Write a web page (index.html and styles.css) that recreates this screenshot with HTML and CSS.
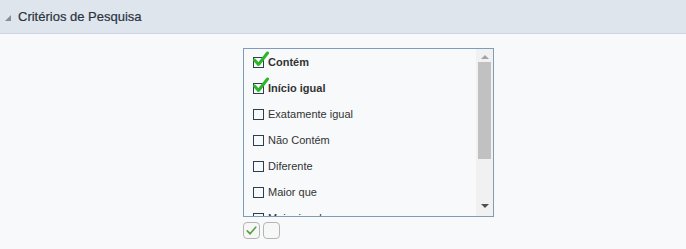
FILE: index.html
```html
<!DOCTYPE html>
<html lang="pt">
<head>
  <meta charset="UTF-8">
  <title>Critérios de Pesquisa</title>
  <link rel="stylesheet" href="styles.css">
</head>
<body>
  <div class="panel">
    <div class="panelHeader">
      <span class="toggle"></span>
      <span class="panelTitle">Critérios de Pesquisa</span>
    </div>

    <div class="panelBody">
      <div class="picker">
        <div class="listBox">
          <ul class="options">
            <li class="option checked">
              <span class="box"><svg class="tick" viewBox="0 0 16 16"><path d="M1.5 8.5 L5.5 13 L14.5 1.5" /></svg></span>
              Contém
            </li>
            <li class="option checked">
              <span class="box"><svg class="tick" viewBox="0 0 16 16"><path d="M1.5 8.5 L5.5 13 L14.5 1.5" /></svg></span>
              Início igual
            </li>
            <li class="option"><span class="box"></span>Exatamente igual</li>
            <li class="option"><span class="box"></span>Não Contém</li>
            <li class="option"><span class="box"></span>Diferente</li>
            <li class="option"><span class="box"></span>Maior que</li>
            <li class="option"><span class="box"></span>Maior igual</li>
          </ul>
          <div class="scrollBar">
            <span class="arrow up"></span>
            <span class="thumb"></span>
            <span class="arrow down"></span>
          </div>
        </div>

        <div class="actions">
          <button class="actionBtn" title="Marcar todos">
            <svg viewBox="0 0 16 16"><path d="M3.5 8.5 L6.5 11.5 L12.5 4.5" /></svg>
          </button>
          <button class="actionBtn" title="Desmarcar todos"></button>
        </div>
      </div>
    </div>
  </div>
</body>
</html>
```

FILE: styles.css
```css
html, body {
  margin: 0;
  padding: 0;
  font-family: 'Liberation Sans', Arial, sans-serif;
  background-color: #f7f9fb;
  color: #333333;
}

.panelHeader {
  height: 33px;
  background-color: #dfe5ed;
  border-bottom: 1px solid #ccd6e2;
  display: flex;
  align-items: center;
  padding-left: 5px;
}

.toggle {
  width: 0;
  height: 0;
  border-left: 6px solid transparent;
  border-bottom: 6px solid #8a8f96;
  margin-right: 7px;
  margin-top: 2px;
}

.panelTitle {
  font-size: 13px;
  color: #2a3441;
  margin-top: -1px;
  -webkit-text-stroke: 0.2px #2a3441;
}

.panelBody {
  display: flex;
  justify-content: center;
  padding-top: 14px;
}

.picker {
  margin-left: 51px;
}

.listBox {
  width: 249px;
  height: 167px;
  border: 1px solid #7f9db9;
  background-color: #f7f9fb;
  display: flex;
  overflow: hidden;
}

.options {
  list-style: none;
  margin: 0;
  padding: 0;
  flex: 1;
}

.option {
  height: 26px;
  display: flex;
  align-items: center;
  padding-left: 9px;
  font-size: 11px;
  color: #333333;
  white-space: nowrap;
}

.option.checked {
  font-weight: bold;
}

.box {
  position: relative;
  width: 9px;
  height: 9px;
  border: 1px solid #2b3f4e;
  margin-right: 4px;
  flex-shrink: 0;
}

.tick {
  position: absolute;
  left: -1px;
  top: -7px;
  width: 16px;
  height: 17px;
  fill: none;
  stroke: #2bb52b;
  stroke-width: 3;
  stroke-linecap: round;
  stroke-linejoin: round;
}

.scrollBar {
  width: 17px;
  background-color: #f1f1f1;
  display: flex;
  flex-direction: column;
  align-items: center;
}

.thumb {
  width: 13px;
  height: 97px;
  background-color: #c1c1c1;
  margin-top: 3px;
}

.arrow {
  width: 0;
  height: 0;
  border-left: 4px solid transparent;
  border-right: 4px solid transparent;
}

.arrow.up {
  border-bottom: 4px solid #a3a3a3;
  margin-top: 6px;
}

.arrow.down {
  border-top: 4px solid #505050;
  margin-top: auto;
  margin-bottom: 8px;
}

.actions {
  display: flex;
  gap: 3px;
  margin-top: 5px;
}

.actionBtn {
  width: 17px;
  height: 17px;
  padding: 0;
  border: 1px solid #b4b4b4;
  border-radius: 4px;
  background-color: #f7f7f7;
  display: flex;
  align-items: center;
  justify-content: center;
}

.actionBtn svg {
  width: 15px;
  height: 15px;
  fill: none;
  stroke: #5aa341;
  stroke-width: 1.8;
  stroke-linecap: round;
  stroke-linejoin: round;
}
```
